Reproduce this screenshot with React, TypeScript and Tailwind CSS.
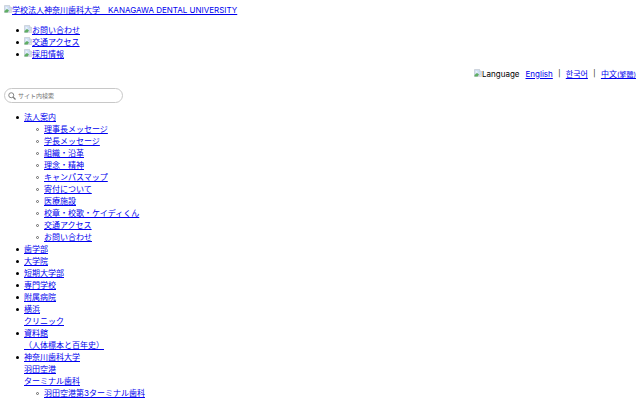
import type { ReactNode } from 'react'

type NavItem = {
  lines: string[]
  children?: string[]
}

const UTILITY = ['お問い合わせ', '交通アクセス', '採用情報']

const NAV: NavItem[] = [
  {
    lines: ['法人案内'],
    children: [
      '理事長メッセージ',
      '学長メッセージ',
      '組織・沿革',
      '理念・精神',
      'キャンパスマップ',
      '寄付について',
      '医療施設',
      '校章・校歌・ケイディくん',
      '交通アクセス',
      'お問い合わせ',
    ],
  },
  { lines: ['歯学部'] },
  { lines: ['大学院'] },
  { lines: ['短期大学部'] },
  { lines: ['専門学校'] },
  { lines: ['附属病院'] },
  { lines: ['横浜', 'クリニック'] },
  { lines: ['資料館', '（人体標本と百年史）'] },
  {
    lines: ['神奈川歯科大学', '羽田空港', 'ターミナル歯科'],
    children: ['羽田空港第3ターミナル歯科'],
  },
]

const LINK = 'text-[#0000ee] underline'

function MissingImage() {
  return (
    <svg viewBox="0 0 16 16" className="inline-block size-2 align-baseline" aria-hidden="true">
      <path d="M1 1h10l4 4v3l-7 7H1z" fill="#cfdff3" stroke="#b4bac2" />
      <path d="M11 1v4h4" fill="#fff" stroke="#b4bac2" />
      <path d="M3 6c0-2 3-2 3.5-.5C8 5.5 8 7 7 7H3.5z" fill="#fff" />
      <path d="M1 15v-3l5-4 4 3-3 4z" fill="#5fae62" />
      <path d="M15 9v6H9z" fill="#e4e8ec" stroke="#c0c5ca" />
    </svg>
  )
}

function Item({ nested = false, children }: { nested?: boolean; children: ReactNode }) {
  return (
    <li className="flex">
      <span className="flex h-3 w-5 shrink-0 items-center justify-end pr-[5px]">
        <span
          className={
            nested
              ? 'size-[3px] rounded-full border border-[#666]'
              : 'size-[3px] rounded-full bg-black'
          }
        />
      </span>
      <div>{children}</div>
    </li>
  )
}

export default function App() {
  return (
    <div className="bg-white px-1 pt-1 font-['Inter','Noto_Sans_CJK_JP',sans-serif] text-[8px] leading-3 text-black">
      <header>
        <a href="#" className={`${LINK} block`}>
          <MissingImage />
          学校法人神奈川歯科大学　KANAGAWA DENTAL UNIVERSITY
        </a>

        <ul className="mt-2">
          {UTILITY.map((label) => (
            <Item key={label}>
              <a href="#" className={LINK}>
                <MissingImage />
                {label}
              </a>
            </Item>
          ))}
        </ul>

        {/* 言語切り替え */}
        <div className="mt-2 flex justify-end font-['Inter','Noto_Sans_CJK_KR','Noto_Sans_CJK_TC',sans-serif]">
          <span className="mr-1.5">
            <MissingImage />
            Language
          </span>
          <a href="#" className={LINK}>English</a>
          <span className="w-[13px] text-center text-[7px]">|</span>
          <a href="#" lang="ko" className={LINK}>한국어</a>
          <span className="w-[13px] text-center text-[7px]">|</span>
          <a href="#" lang="zh-Hant" className={LINK}>
            中文<span className="text-[7px]">(繁體)</span>
          </a>
        </div>

        <form className="mt-[7px] flex h-[15px] w-[119px] items-center gap-0.5 rounded-full border border-[#c8c8c8] px-[3px]">
          <svg viewBox="0 0 16 16" className="size-2 shrink-0" fill="none" stroke="#777" strokeWidth="1.8" aria-hidden="true">
            <circle cx="6.5" cy="6.5" r="5" />
            <path d="M10.5 10.5L15 15" strokeWidth="2.4" />
          </svg>
          <input
            type="text"
            aria-label="サイト内検索"
            placeholder="サイト内検索"
            className="min-w-0 flex-1 text-[6px] leading-3 outline-none placeholder:text-[#757575]"
          />
        </form>
      </header>

      <nav className="mt-2">
        <ul>
          {NAV.map(({ lines, children }) => (
            <Item key={lines[0]}>
              <a href="#" className={`${LINK} block`}>
                {lines.map((line) => (
                  <span key={line} className="block">{line}</span>
                ))}
              </a>
              {children && (
                <ul>
                  {children.map((label) => (
                    <Item key={label} nested>
                      <a href="#" className={`${LINK} block`}>{label}</a>
                    </Item>
                  ))}
                </ul>
              )}
            </Item>
          ))}
        </ul>
      </nav>
    </div>
  )
}
